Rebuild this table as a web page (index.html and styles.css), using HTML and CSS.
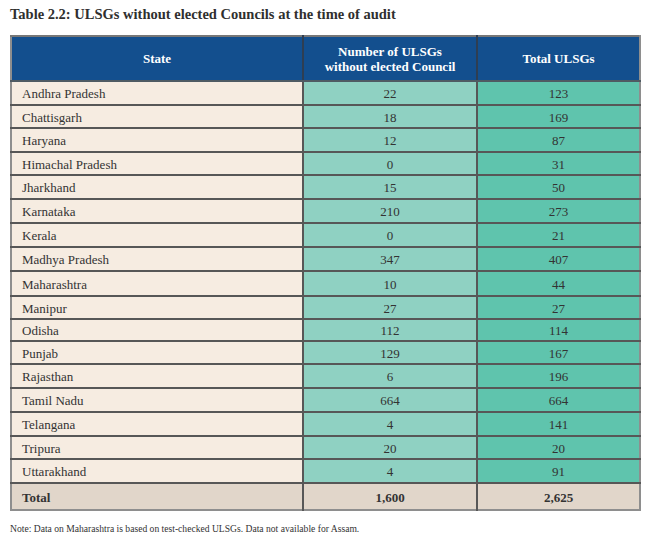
FILE: index.html
```html
<!DOCTYPE html>
<html>
<head>
<meta charset="utf-8">
<link rel="stylesheet" href="styles.css">
</head>
<body>
<div class="page">
  <h1 class="title">Table 2.2: ULSGs without elected Councils at the time of audit</h1>
  <table class="data">
    <colgroup>
      <col class="c1"><col class="c2"><col class="c3">
    </colgroup>
    <thead>
      <tr>
        <th>State</th>
        <th>Number of ULSGs<br>without elected Council</th>
        <th>Total ULSGs</th>
      </tr>
    </thead>
    <tbody>
      <tr><td>Andhra Pradesh</td><td>22</td><td>123</td></tr>
      <tr><td>Chattisgarh</td><td>18</td><td>169</td></tr>
      <tr><td>Haryana</td><td>12</td><td>87</td></tr>
      <tr><td>Himachal Pradesh</td><td>0</td><td>31</td></tr>
      <tr><td>Jharkhand</td><td>15</td><td>50</td></tr>
      <tr class="tall"><td>Karnataka</td><td>210</td><td>273</td></tr>
      <tr><td>Kerala</td><td>0</td><td>21</td></tr>
      <tr class="tall"><td>Madhya Pradesh</td><td>347</td><td>407</td></tr>
      <tr class="tall"><td>Maharashtra</td><td>10</td><td>44</td></tr>
      <tr><td>Manipur</td><td>27</td><td>27</td></tr>
      <tr class="short"><td>Odisha</td><td>112</td><td>114</td></tr>
      <tr><td>Punjab</td><td>129</td><td>167</td></tr>
      <tr><td>Rajasthan</td><td>6</td><td>196</td></tr>
      <tr class="tall"><td>Tamil Nadu</td><td>664</td><td>664</td></tr>
      <tr><td>Telangana</td><td>4</td><td>141</td></tr>
      <tr><td>Tripura</td><td>20</td><td>20</td></tr>
      <tr><td>Uttarakhand</td><td>4</td><td>91</td></tr>
    </tbody>
    <tfoot>
      <tr><td>Total</td><td>1,600</td><td>2,625</td></tr>
    </tfoot>
  </table>
  <p class="note">Note: Data on Maharashtra is based on test-checked ULSGs. Data not available for Assam.</p>
</div>
</body>
</html>
```

FILE: styles.css
```css
html, body {
  margin: 0;
  padding: 0;
  background: #ffffff;
}

.page {
  padding: 4px 0 0 10px;
  font-family: "Liberation Serif", "Times New Roman", serif;
  color: #333333;
}

.title {
  margin: 0 0 11px 0;
  font-size: 14.5px;
  font-weight: bold;
  line-height: 20px;
  color: #2f2f2f;
}

.data {
  width: 629px;
  border-collapse: collapse;
  border: 2px solid #8e8e8e;
  border-top-color: #777;
  font-size: 13px;
  table-layout: fixed;
}

.c1 { width: 292px; }
.c2 { width: 174px; }
.c3 { width: 163px; }

.data th {
  background: #134f8e;
  color: #ffffff;
  font-weight: bold;
  height: 43px;
  padding: 0;
  line-height: 15px;
  text-align: center;
  border-right: 2px solid #2e3e52;
  border-bottom: 2px solid #4f5b63;
}

.data th:last-child {
  border-right: none;
}

.data td {
  padding: 2px 0 0 0;
  box-sizing: border-box;
  line-height: 15px;
  text-align: center;
  border: 2px solid #575757;
  border-left: none;
  border-top: none;
}

.data tbody td {
  height: 23.5px;
}

.data td:last-child {
  border-right: none;
}

.data tbody tr.tall td {
  height: 24.5px;
}

.data tbody tr.short td {
  height: 21.5px;
}

.data td:first-child {
  text-align: left;
  padding-left: 10px;
  background: #f6ece1;
}

.data td:nth-child(2) {
  background: #8fd1c2;
}

.data td:nth-child(3) {
  background: #5fc4ad;
}

.data tfoot td {
  height: 27px;
  font-weight: bold;
  background: #e1d6ca !important;
  border-bottom: none;
  border-top: 2px solid #4a4a4a;
}

.note {
  margin: 12px 0 0 0;
  font-size: 9.6px;
  line-height: 12px;
  color: #333333;
}
```
